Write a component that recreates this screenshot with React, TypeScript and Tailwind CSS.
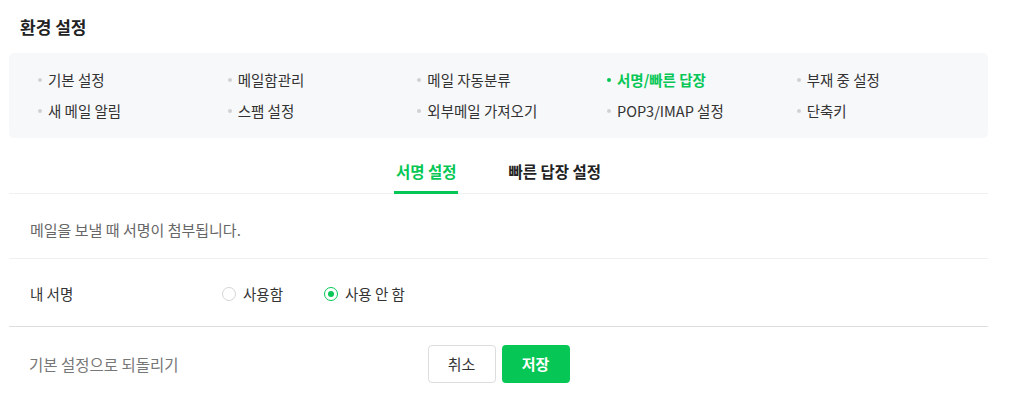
import { useState } from "react";

const menu = [
  ["기본 설정", "메일함관리", "메일 자동분류", "서명/빠른 답장", "부재 중 설정"],
  ["새 메일 알림", "스팸 설정", "외부메일 가져오기", "POP3/IMAP 설정", "단축키"],
];

const ACTIVE_MENU = "서명/빠른 답장";

function Radio({ checked, label, onClick }: { checked: boolean; label: string; onClick: () => void }) {
  return (
    <button type="button" onClick={onClick} className="flex items-center gap-[7px] text-[14.5px] leading-[20px] text-[#333]">
      <span
        className={
          checked
            ? "flex h-[14px] w-[14px] items-center justify-center rounded-full border border-[#06c755] bg-white"
            : "flex h-[14px] w-[14px] items-center justify-center rounded-full border border-[#d5d5d5] bg-white"
        }
      >
        {checked && <span className="h-[6px] w-[6px] rounded-full bg-[#06c755]" />}
      </span>
      {label}
    </button>
  );
}

export default function App() {
  const [tab, setTab] = useState("sign");
  const [useSign, setUseSign] = useState(false);

  return (
    <div className="h-[408px] w-[1026px] bg-white font-['Noto_Sans_CJK_KR','Noto_Sans',sans-serif] text-[#333]">
      <div className="w-[988px] pl-[9px]">
        <h1 className="flex h-[53px] items-center pl-[11px] text-[17px] font-bold text-[#222]">환경 설정</h1>

        <nav className="rounded-[5px] bg-[#f7f8fa] pb-[12px] pl-[29px] pt-[11px]">
          {menu.map((row, i) => (
            <ul key={i} className="grid h-[31px] grid-cols-[repeat(5,189.67px)] items-center">
              {row.map((item) => {
                const active = item === ACTIVE_MENU;
                return (
                  <li
                    key={item}
                    className={
                      active
                        ? "flex items-center gap-[6px] text-[14.5px] font-bold text-[#06c755]"
                        : "flex items-center gap-[6px] text-[14.5px] text-[#333]"
                    }
                  >
                    <span className={active ? "h-1 w-1 rounded-full bg-[#06c755]" : "h-1 w-1 rounded-full bg-[#cfd1d4]"} />
                    {item}
                  </li>
                );
              })}
            </ul>
          ))}
        </nav>

        <div className="flex justify-center gap-[48px] border-b border-[#f0f0f0]">
          <button
            type="button"
            onClick={() => setTab("sign")}
            className={
              tab === "sign"
                ? "-mb-px border-b-[3px] border-[#06c755] px-[2px] pb-[10px] pt-[23px] text-[15.5px] font-bold leading-[20px] text-[#06c755]"
                : "-mb-px border-b-[3px] border-transparent px-[2px] pb-[10px] pt-[23px] text-[15.5px] font-bold leading-[20px] text-[#222]"
            }
          >
            서명 설정
          </button>
          <button
            type="button"
            onClick={() => setTab("reply")}
            className={
              tab === "reply"
                ? "-mb-px border-b-[3px] border-[#06c755] px-[2px] pb-[10px] pt-[23px] text-[15.5px] font-bold leading-[20px] text-[#06c755]"
                : "-mb-px border-b-[3px] border-transparent px-[2px] pb-[10px] pt-[23px] text-[15.5px] font-bold leading-[20px] text-[#222]"
            }
          >
            빠른 답장 설정
          </button>
        </div>

        <p className="border-b border-[#f0f0f0] px-[21px] pb-[18px] pt-[26px] text-[15px] leading-[20px] text-[#666]">
          메일을 보낼 때 서명이 첨부됩니다.
        </p>

        <div className="flex items-center border-b border-[#dedede] px-[21px] pb-[22px] pt-[25px]">
          <span className="w-[192px] text-[14.5px] leading-[20px] text-[#333]">내 서명</span>
          <div className="flex items-center gap-[41px]">
            <Radio checked={useSign} label="사용함" onClick={() => setUseSign(true)} />
            <Radio checked={!useSign} label="사용 안 함" onClick={() => setUseSign(false)} />
          </div>
        </div>

        <div className="grid grid-cols-[1fr_auto_1fr] items-center pt-[18px]">
          <button type="button" className="justify-self-start pl-[20px] text-[15.5px] leading-[20px] text-[#777]">
            기본 설정으로 되돌리기
          </button>
          <div className="flex gap-[6px]">
            <button type="button" className="h-[38px] w-[68px] rounded-[4px] border border-[#dddddd] bg-white text-[15px] text-[#333]">
              취소
            </button>
            <button type="button" className="h-[38px] w-[68px] rounded-[4px] bg-[#06c755] text-[15px] font-bold text-white">
              저장
            </button>
          </div>
          <div />
        </div>
      </div>
    </div>
  );
}
